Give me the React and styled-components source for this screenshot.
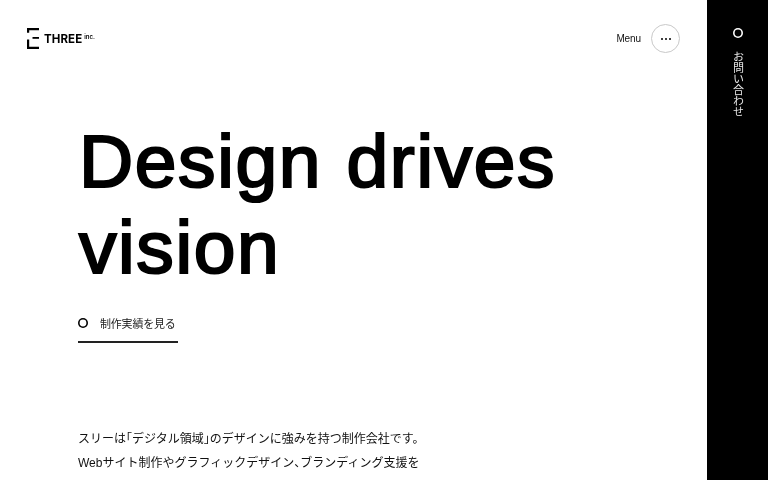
import React from "react";
import styled, { createGlobalStyle } from "styled-components";

const GlobalStyle = createGlobalStyle`
    html, body {
        margin: 0;
        padding: 0;
        height: 100%;
        overflow: hidden;
        background: #fff;
    }
    body {
        font-family: "Liberation Sans", "Noto Sans CJK JP", sans-serif;
        color: #000;
    }
`;

const App = () => {
    return (
        <>
            <GlobalStyle />
            <Page>
                <Main>
                    <Header>
                        <Logo href="#">
                            <LogoMark viewBox="0 0 12 21" aria-hidden="true">
                                <path d="M0 0h12v2.2H2.2v2.6H0z" fill="#000" />
                                <path d="M5.5 9h6.5v1.8H5.5z" fill="#000" />
                                <path d="M0 11.5h2.2v7.3H12V21H0z" fill="#000" />
                            </LogoMark>
                            <LogoName>THREE</LogoName>
                            <LogoSuffix>inc.</LogoSuffix>
                        </Logo>
                        <MenuArea>
                            <MenuLabel>Menu</MenuLabel>
                            <MenuButton aria-label="Menu">
                                <Dot />
                                <Dot />
                                <Dot />
                            </MenuButton>
                        </MenuArea>
                    </Header>
                    <Hero>
                        <Headline>
                            Design drives
                            <br />
                            vision
                        </Headline>
                        <WorksLink href="#">
                            <Ring />
                            制作実績を見る
                        </WorksLink>
                        <Lead>
                            スリーは<Tight>「</Tight>デジタル領域<Tight>」</Tight>のデザインに強みを持つ制作会社です。
                            <br />
                            Webサイト制作やグラフィックデザイン<Tight>、</Tight>ブランディング支援を
                        </Lead>
                    </Hero>
                </Main>
                <ContactBar href="#">
                    <Ring $light />
                    <ContactText>お問い合わせ</ContactText>
                </ContactBar>
            </Page>
        </>
    );
};

const Page = styled.div`
    display: flex;
    width: 768px;
    height: 480px;
    overflow: hidden;
    will-change: transform;
`;

const Main = styled.main`
    flex: 1;
    min-width: 0;
`;

const Header = styled.header`
    display: flex;
    justify-content: space-between;
    align-items: center;
    height: 29px;
    padding: 24px 27px 0 27px;
`;

const Logo = styled.a`
    display: flex;
    align-items: center;
    color: #000;
    text-decoration: none;
`;

const LogoMark = styled.svg`
    width: 12px;
    height: 21px;
    margin-right: 5px;
`;

const LogoName = styled.span`
    font-family: "Inter", sans-serif;
    font-size: 11.5px;
    font-weight: 700;
    letter-spacing: 0.1px;
`;

const LogoSuffix = styled.span`
    font-family: "Inter", sans-serif;
    font-size: 6px;
    font-weight: 600;
    margin: -4px 0 0 2px;
`;

const MenuArea = styled.div`
    display: flex;
    align-items: center;
    gap: 10px;
`;

const MenuLabel = styled.span`
    font-size: 10px;
    letter-spacing: -0.1px;
    color: #111;
`;

const MenuButton = styled.button`
    display: flex;
    align-items: center;
    justify-content: center;
    gap: 2px;
    width: 29px;
    height: 29px;
    padding: 0;
    background: #fff;
    border: 1px solid #c8c8c8;
    border-radius: 50%;
`;

const Dot = styled.i`
    display: block;
    width: 2px;
    height: 2px;
    border-radius: 50%;
    background: #000;
`;

const Hero = styled.section`
    padding: 65px 0 0 78px;
`;

const Headline = styled.h1`
    margin: 0 0 0 1px;
    font-family: "Liberation Sans", sans-serif;
    font-size: 75px;
    font-weight: 400;
    line-height: 86px;
    letter-spacing: 1.6px;
    word-spacing: 2px;
    -webkit-text-stroke: 2.2px #000;
`;

const WorksLink = styled.a`
    display: flex;
    align-items: center;
    gap: 12px;
    width: 100px;
    height: 36px;
    margin-top: 15px;
    border-bottom: 2px solid #222;
    color: #222;
    font-size: 11px;
    letter-spacing: -0.2px;
    text-decoration: none;
    white-space: nowrap;
`;

const Ring = styled.span`
    display: block;
    flex: none;
    width: 10px;
    height: 10px;
    border-radius: 50%;
    box-shadow: inset 0 0 0 1.6px ${(props) => (props.$light ? "#fff" : "#000")};
`;

const Lead = styled.p`
    margin: 84px 0 0;
    font-size: 12px;
    line-height: 24px;
    color: #111;
    white-space: nowrap;
`;

const Tight = styled.span`
    font-feature-settings: "halt";
`;

const ContactBar = styled.a`
    display: flex;
    flex: none;
    flex-direction: column;
    align-items: center;
    gap: 13px;
    box-sizing: border-box;
    width: 61px;
    padding-top: 28px;
    background: #000;
    color: #e8e8e8;
    text-decoration: none;
`;

const ContactText = styled.span`
    writing-mode: vertical-rl;
    font-size: 11px;
    letter-spacing: 0;
`;

export default App;
